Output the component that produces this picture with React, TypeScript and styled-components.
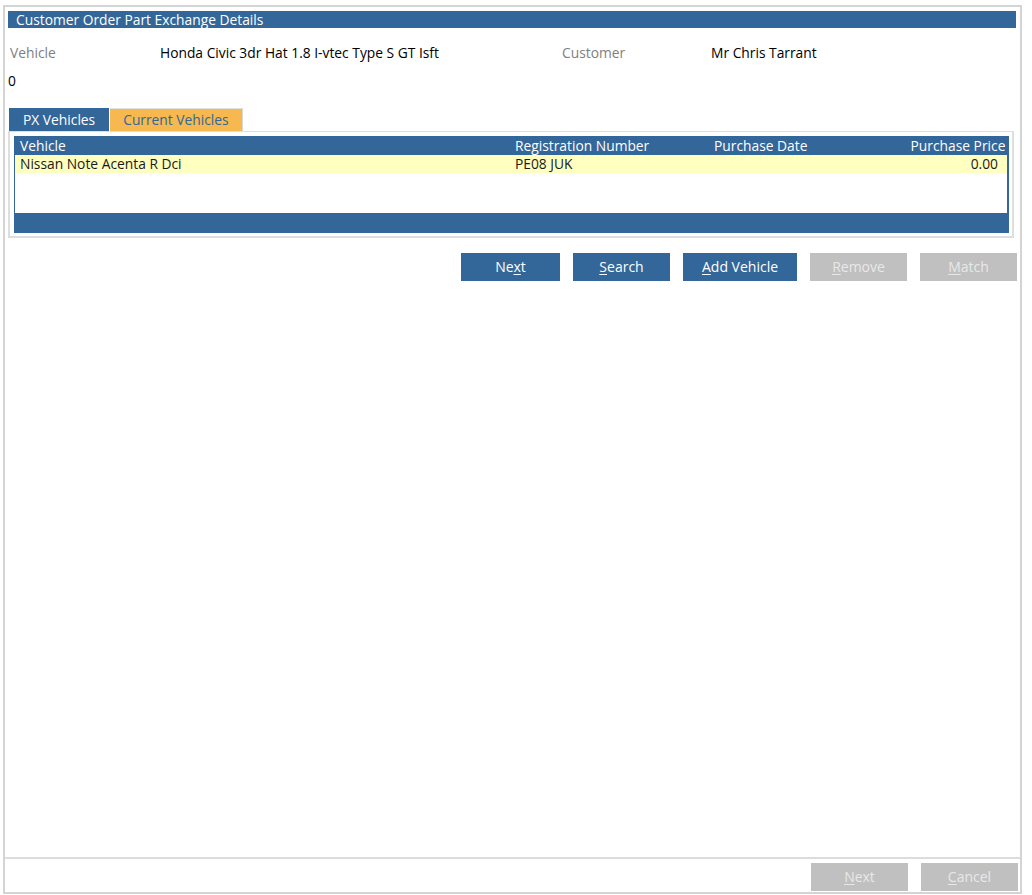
import styled, { createGlobalStyle } from "styled-components";

const Global = createGlobalStyle`
  html, body {
    margin: 0;
    padding: 0;
    background: #ffffff;
  }
  body {
    font-family: "Open Sans", "DejaVu Sans", sans-serif;
    font-size: 13.8px;
    color: #000000;
  }
`;

const BLUE = "#336699";

const Frame = styled.div`
  margin: 5px 0 0 3px;
  width: 1019px;
  height: 889px;
  box-sizing: border-box;
  border: 2px solid #d4d4d4;
  display: flex;
  flex-direction: column;
`;

const Content = styled.div`
  flex: 1;
  padding: 4px 3px 0 3px;
  display: flex;
  flex-direction: column;
`;

const TitleBar = styled.div`
  background: ${BLUE};
  color: #ffffff;
  height: 17px;
  line-height: 17px;
  padding-left: 8px;
  margin-right: 1px;
`;

const InfoRow = styled.div`
  display: grid;
  grid-template-columns: 150px 402px 149px auto;
  padding: 16px 0 0 2px;
  line-height: 18px;
`;

const Label = styled.span`
  color: #808080;
`;

const Value = styled.span`
  color: #000000;
`;

const Zero = styled.div`
  margin-top: 10px;
  line-height: 18px;
`;

const Tabs = styled.div`
  display: flex;
  margin-top: 18px;
  padding-left: 1px;
`;

const Tab = styled.div<{ $active?: boolean }>`
  height: 23px;
  box-sizing: border-box;
  padding: ${(p) => (p.$active ? "0 14px 0 14px" : "0 13px")};
  background: ${(p) => (p.$active ? BLUE : "#f7b94f")};
  color: ${(p) => (p.$active ? "#ffffff" : BLUE)};
  border-right: 1px solid ${(p) => (p.$active ? "#ffffff" : "#d8d8d8")};
  border-top: ${(p) => (p.$active ? "none" : "1px solid #e0e0e0")};
  line-height: ${(p) => (p.$active ? "23px" : "22px")};
`;

const TabPanel = styled.div`
  width: 1006px;
  box-sizing: border-box;
  border: 2px solid #dedede;
  border-top-width: 1px;
  padding: 4px 3px 3px 4px;
`;

const Grid = styled.div`
  background: ${BLUE};
  padding: 1px 2px 20px 1px;
`;

const GridRow = styled.div<{ $head?: boolean }>`
  display: grid;
  grid-template-columns: 495px 199px 1fr 200px;
  height: 18px;
  line-height: 18px;
  padding: 0 ${(p) => (p.$head ? "5px" : "7px")} 0 5px;
  background: ${(p) => (p.$head ? BLUE : "#ffffc0")};
  color: ${(p) => (p.$head ? "#ffffff" : "#1a1a1a")};
`;

const Cell = styled.span<{ $right?: boolean }>`
  text-align: ${(p) => (p.$right ? "right" : "left")};
  padding-right: ${(p) => (p.$right ? "2px" : "0")};
  white-space: nowrap;
`;

const EmptyArea = styled.div`
  height: 40px;
  background: #ffffff;
`;

const ButtonRow = styled.div`
  display: flex;
  justify-content: flex-end;
  gap: 13px;
  margin-top: 15px;
`;

const Button = styled.div<{ $disabled?: boolean; $w?: number }>`
  width: ${(p) => p.$w ?? 98}px;
  height: 28px;
  line-height: 28px;
  text-align: center;
  box-sizing: border-box;
  background: ${(p) => (p.$disabled ? "#c0c0c0" : BLUE)};
  color: ${(p) => (p.$disabled ? "#e8e8e8" : "#ffffff")};
  font-size: 14px;
  u {
    text-decoration-thickness: 1px;
    text-underline-offset: 2px;
  }
`;

const Footer = styled.div`
  border-top: 2px solid #dcdcdc;
  height: 32px;
  display: flex;
  justify-content: flex-end;
  align-items: flex-end;
  gap: 13px;
  padding: 0 2px 1px 0;
`;

export default function App() {
  return (
    <>
      <Global />
      <Frame>
        <Content>
          <TitleBar>Customer Order Part Exchange Details</TitleBar>
          <InfoRow>
            <Label>Vehicle</Label>
            <Value>Honda Civic 3dr Hat 1.8 I-vtec Type S GT Isft</Value>
            <Label>Customer</Label>
            <Value>Mr Chris Tarrant</Value>
          </InfoRow>
          <Zero>0</Zero>
          <Tabs>
            <Tab $active>PX Vehicles</Tab>
            <Tab>Current Vehicles</Tab>
          </Tabs>
          <TabPanel>
            <Grid>
              <GridRow $head>
                <Cell>Vehicle</Cell>
                <Cell>Registration Number</Cell>
                <Cell>Purchase Date</Cell>
                <Cell $right>Purchase Price</Cell>
              </GridRow>
              <GridRow>
                <Cell>Nissan Note Acenta R Dci</Cell>
                <Cell>PE08 JUK</Cell>
                <Cell></Cell>
                <Cell $right>0.00</Cell>
              </GridRow>
              <EmptyArea />
            </Grid>
          </TabPanel>
          <ButtonRow>
            <Button $w={99}>
              Ne<u>x</u>t
            </Button>
            <Button $w={97}>
              <u>S</u>earch
            </Button>
            <Button $w={114}>
              <u>A</u>dd Vehicle
            </Button>
            <Button $disabled $w={97}>
              <u>R</u>emove
            </Button>
            <Button $disabled $w={97}>
              <u>M</u>atch
            </Button>
          </ButtonRow>
        </Content>
        <Footer>
          <Button $disabled $w={97}>
            <u>N</u>ext
          </Button>
          <Button $disabled $w={97}>
            <u>C</u>ancel
          </Button>
        </Footer>
      </Frame>
    </>
  );
}
